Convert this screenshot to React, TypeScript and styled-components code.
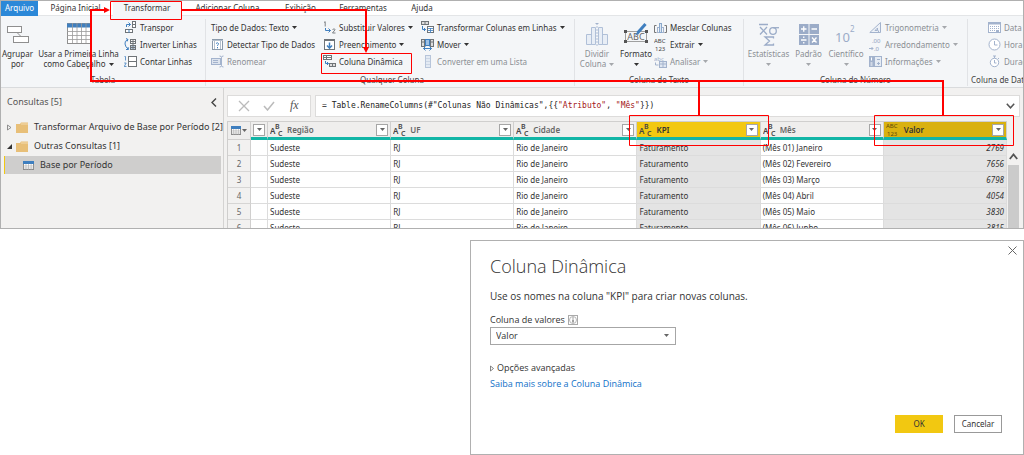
import React from "react";
import styled, { createGlobalStyle, css } from "styled-components";

const Global = createGlobalStyle`
  * { box-sizing: border-box; }
  body { margin: 0; background: #fff; color: #333; font: 8px/10px "Noto Sans", "Open Sans", sans-serif; }
  button, select, input { font: inherit; color: inherit; margin: 0; padding: 0; border: 0; background: none; }
  svg { display: block; flex: none; }
`;

/* ---------- layout ---------- */
const Page = styled.main`
  position: relative;
  display: flex;
  flex-direction: column;
  gap: 11px;
`;
const AppWindow = styled.section`
  border: 1px solid #b0b0b0;
  overflow: hidden;
`;
const Tabs = styled.nav`
  display: flex;
  height: 15px;
  background: #fff;
  border-bottom: 1px solid #e3e5e7;
`;
const Tab = styled.button<{ $w: number; $kind?: "file" | "active" }>`
  flex: none;
  width: ${(p) => p.$w}px;
  height: 15px;
  line-height: 12px;
  padding-bottom: 2px;
  white-space: nowrap;
  ${(p) => p.$kind === "file" && css`background: #2b88d8; color: #fff;`}
  ${(p) => p.$kind === "active" && css`background: #f4f6f8;`}
`;
const Ribbon = styled.div`
  display: flex;
  height: 72px;
  padding-top: 3px;
  background: #f4f6f8;
  border-bottom: 1px solid #d9dbdd;
`;
const Group = styled.section<{ $w?: number; $pad?: number }>`
  ${(p) => (p.$w ? css`flex: none; width: ${p.$w}px; border-right: 1px solid #e1e3e6;` : css`flex: 1; min-width: 0; overflow: hidden;`)}
  padding-left: ${(p) => p.$pad ?? 0}px;
  height: 67px;
  display: flex;
  flex-direction: column;
  justify-content: space-between;
`;
const GroupBody = styled.div`
  display: flex;
`;
const GroupLabel = styled.div<{ $start?: boolean }>`
  text-align: ${(p) => (p.$start ? "left" : "center")};
  line-height: 12px;
  white-space: nowrap;
  color: #444;
`;
const Column = styled.div<{ $w: number }>`
  flex: none;
  width: ${(p) => p.$w}px;
  display: flex;
  flex-direction: column;
`;
const SmallButton = styled.button<{ $off?: boolean }>`
  display: flex;
  align-items: center;
  gap: 3px;
  height: 17px;
  padding: 0 1px;
  white-space: nowrap;
  color: ${(p) => (p.$off ? "#8b8f94" : "#333")};
`;
const BigButton = styled.button<{ $w: number; $off?: boolean }>`
  flex: none;
  width: ${(p) => p.$w}px;
  display: flex;
  flex-direction: column;
  align-items: center;
  white-space: nowrap;
  color: ${(p) => (p.$off ? "#8b8f94" : "#333")};
`;
const BigIcon = styled.span`
  height: 30px;
  display: flex;
  align-items: center;
`;
const Line = styled.span`
  display: flex;
  align-items: center;
  justify-content: center;
  gap: 3px;
  height: 10px;
`;

const Body = styled.div`
  display: flex;
  height: 140px;
  background: #f2f1f0;
`;
const Sidebar = styled.aside`
  flex: none;
  width: 223px;
  padding: 7px 2px 0 3px;
  border-right: 1px solid #d4d3d2;
  font-size: 9px;
`;
const SideHead = styled.header`
  display: flex;
  align-items: center;
  justify-content: space-between;
  height: 14px;
  margin-bottom: 9px;
  padding: 0 4px 0 3px;
  h2 { margin: 0; font-size: 9px; font-weight: 400; color: #555; }
`;
const Tree = styled.ul`
  list-style: none;
  margin: 0;
  padding: 0;
  display: flex;
  flex-direction: column;
  gap: 1px;
`;
const TreeItem = styled.li<{ $selected?: boolean }>`
  display: flex;
  align-items: center;
  height: 18px;
  gap: 4px;
  padding-left: 3px;
  white-space: nowrap;
  span { margin-left: 2px; }
  ${(p) => p.$selected && css`background: #cfcecd; border-left: 1px solid #f2c811; padding-left: 18px;`}
`;
const Workspace = styled.div`
  flex: 1;
  min-width: 0;
  padding: 7px 3px 0;
  display: flex;
  flex-direction: column;
  gap: 4px;
`;
const FormulaBar = styled.div`
  display: flex;
  flex: none;
  gap: 4px;
  height: 22px;
`;
const FormulaTools = styled.div`
  flex: none;
  width: 84px;
  display: flex;
  align-items: center;
  justify-content: space-around;
  padding: 0 3px;
  background: #fff;
  border: 1px solid #dddcdb;
`;
const Formula = styled.div`
  flex: 1;
  min-width: 0;
  display: flex;
  align-items: center;
  justify-content: space-between;
  padding: 0 4px 0 6px;
  background: #fff;
  border: 1px solid #dddcdb;
  code { font: 8px/12px "DejaVu Sans Mono", monospace; color: #222; white-space: pre; }
  em { font-style: normal; color: #a31515; }
`;
const GridArea = styled.div`
  display: flex;
  flex: 1;
  min-height: 0;
  overflow: hidden;
  border-left: 1px solid #cfcecd;
`;
const TableWrap = styled.div`
  flex: 1;
  min-width: 0;
`;
const Table = styled.table`
  width: 100%;
  table-layout: fixed;
  border-collapse: separate;
  border-spacing: 0;
`;
const RowNumberCol = styled.col`
  width: 23px;
`;
const NarrowCol = styled.col`
  width: 17px;
`;
const Head = styled.th<{ $bg?: string; $corner?: boolean }>`
  height: 19px;
  padding: 0 2px;
  text-align: left;
  font-weight: 600;
  color: ${(p) => (p.$bg ? "#333" : "#666")};
  background: ${(p) => p.$bg ?? "#efeeed"};
  border-top: 1px solid #d0cfce;
  border-right: 1px solid #d0cfce;
  border-bottom: ${(p) => (p.$corner ? "1px solid #d0cfce" : "3px solid #12b5a6")};
`;
const HeadRow = styled.div<{ $tight?: boolean }>`
  display: flex;
  align-items: center;
  gap: ${(p) => (p.$tight ? 1 : 4)}px;
  padding-left: ${(p) => (p.$tight ? 1 : 0)}px;
`;
const Filter = styled.button`
  flex: none;
  width: 12px;
  height: 12px;
  margin-left: auto;
  display: flex;
  align-items: center;
  justify-content: center;
  background: #fff;
  border: 1px solid #a6a6a6;
`;
const Cell = styled.td<{ $sel?: boolean; $num?: boolean }>`
  height: 16px;
  padding: 0 2px;
  white-space: nowrap;
  background: ${(p) => (p.$sel ? "#e4e4e4" : "#fff")};
  border-right: 1px solid #dcdcdc;
  border-bottom: 1px solid #dcdcdc;
  ${(p) => p.$num && css`text-align: right; font-style: italic;`}
`;
const RowHead = styled.th`
  height: 16px;
  padding: 0;
  text-align: center;
  font-weight: 400;
  color: #666;
  background: #f2f1f0;
  border-right: 1px solid #d0cfce;
  border-bottom: 1px solid #d6d5d4;
`;
const Scrollbar = styled.div`
  flex: none;
  width: 13px;
  padding: 32px 1px 0;
  display: flex;
  flex-direction: column;
  align-items: center;
  gap: 5px;
`;
const Thumb = styled.div`
  flex: 1;
  align-self: stretch;
  background: #cbcbcb;
`;

/* ---------- dialog ---------- */
const Dialog = styled.section`
  position: relative;
  align-self: flex-end;
  width: 554px;
  max-width: 100%;
  padding: 13px 21px 21px 19px;
  background: #fff;
  border: 1px solid #b0b0b0;
  font-family: "Open Sans", "Noto Sans", sans-serif;
  font-size: 9px;
  display: flex;
  flex-direction: column;
  align-items: flex-start;
  h1 { margin: 0 0 12px; font-size: 18px; line-height: 24px; font-weight: 300; color: #333; }
  p { margin: 0 0 12px; font-size: 10px; line-height: 12px; }
`;
const Close = styled.button`
  position: absolute;
  top: 5px;
  right: 6px;
`;
const FieldLabel = styled.label`
  display: flex;
  align-items: center;
  gap: 3px;
  height: 12px;
  margin-bottom: 1px;
`;
const SelectBox = styled.div`
  position: relative;
  margin-bottom: 17px;
  select {
    appearance: none;
    width: 186px;
    height: 18px;
    padding: 0 5px;
    background: #fff;
    border: 1px solid #a6a6a6;
  }
  svg { position: absolute; right: 7px; top: 7px; }
`;
const Advanced = styled.button`
  display: flex;
  align-items: center;
  gap: 3px;
  height: 12px;
  margin-bottom: 4px;
`;
const Link = styled.a`
  line-height: 12px;
  color: #0f70c8;
  text-decoration: none;
`;
const Actions = styled.footer`
  align-self: flex-end;
  display: flex;
  gap: 11px;
  margin-top: 25px;
  font-family: "Noto Sans", "Open Sans", sans-serif;
  font-size: 8px;
`;
const Action = styled.button<{ $primary?: boolean }>`
  width: 48px;
  height: 18px;
  border: 1px solid ${(p) => (p.$primary ? "#f2c811" : "#999")};
  background: ${(p) => (p.$primary ? "#f2c811" : "#fff")};
`;
const Callouts = styled.svg`
  position: absolute;
  top: 0;
  left: 0;
  pointer-events: none;
`;

/* ---------- icons ---------- */
const G = "#6f7478";
const B = "#3f7fbf";
const P = "#a3b3cd";

const Ico = ({ w = 13, h = 13, children }: { w?: number; h?: number; children: React.ReactNode }) => (
  <svg width={w} height={h} viewBox={`0 0 ${w} ${h}`} fill="none" stroke={G} strokeWidth="1" aria-hidden="true">
    {children}
  </svg>
);
const Caret = ({ color = "#333" }: { color?: string }) => (
  <svg width="5" height="3" viewBox="0 0 5 3" aria-hidden="true"><path d="M0 0h5L2.5 3z" fill={color} /></svg>
);
const TableIcon = ({ w = 11, h = 9 }: { w?: number; h?: number }) => (
  <Ico w={w} h={h}>
    <rect x=".5" y=".5" width={w - 1} height={h - 1} fill="#fff" stroke="#8a8a8a" />
    <path d={`M0 1.5h${w}`} stroke={B} strokeWidth="3" />
    <path d={`M${w * 0.27} 3v${h - 3}M${w * 0.5} 3v${h - 3}M${w * 0.74} 3v${h - 3}M0 ${h * 0.55}h${w}M0 ${h * 0.78}h${w}`} stroke="#a9a9a9" strokeWidth=".6" />
  </Ico>
);

const I = {
  group: (
    <Ico w={22} h={17}>
      <rect x=".5" y=".5" width="14" height="6" fill="#fff" stroke="#8f8f8f" />
      <rect x="6.5" y="10.5" width="15" height="6" fill="#fff" stroke="#8f8f8f" />
      <path d="M10 6.5l4 4" stroke="#8f8f8f" />
    </Ico>
  ),
  header: (
    <Ico w={24} h={22}>
      <rect x=".5" y=".5" width="23" height="20" fill="#fff" stroke="#8f8f8f" />
      <path d="M0 2.5h24" stroke={B} strokeWidth="4" />
      <path d="M5.5 0v20M10 0v20M14.5 0v20M19 0v20M0 8.5h24M0 12.5h24M0 16.5h24" stroke="#9b9b9b" strokeWidth=".8" />
    </Ico>
  ),
  transpose: (
    <Ico>
      <path d="M2.5 6V3.500h4M4.500 1.500l2 2-2 2" stroke={B} />
      <rect x="8.500" y=".5" width="3" height="6" fill="#fff" /><path d="M8 3.500h4" />
      <rect x="1.500" y="8.500" width="7" height="3" fill="#fff" /><path d="M5 8.500v3" stroke={B} />
    </Ico>
  ),
  invert: (
    <Ico>
      <path d="M3.500 1.500Q.5 3 1 6t3 5M2 .5l2 1-1 2M2 11.500l2.500 0-.5-2.500" stroke={B} />
      <rect x="6.500" y="1.500" width="5" height="4" fill="#fff" /><rect x="6.500" y="7.500" width="5" height="4" fill="#b8cbe0" /><path d="M7 3.500h5M7 9.500h5M9 1.500v10" />
    </Ico>
  ),
  count: (
    <Ico>
      <path d="M.5 1.500h1v4M.2 8h2L.2 11.500h2.300" stroke={B} strokeWidth=".8" />
      <rect x="4.500" y="1.500" width="8" height="10" fill="#fff" /><path d="M4 6.500h9" />
    </Ico>
  ),
  detect: (
    <Ico>
      <rect x="1.500" y="1.500" width="10" height="10" fill="#fff" stroke="#8a9aab" /><path d="M1 2.500h11M3.500 3v8M9.500 3v8" stroke="#b4c0cd" />
      <path d="M5 5.500q1.500-1.500 2.500 0c0 1.500-1 1-1 2.500M6.500 9v1.300" stroke={B} />
    </Ico>
  ),
  rename: (
    <Ico>
      <rect x=".5" y="3.500" width="9" height="6" fill="#dde4ee" stroke={P} /><path d="M2 5.500h5M2 7.500h5" stroke={P} />
      <path d="M8.500 1q2 0 2 1.500v8q0 1.500-2 1.500M12.500 1q-2 0-2 1.500M12.500 12q-2 0-2-1.500" stroke={P} />
    </Ico>
  ),
  replace: (
    <Ico>
      <path d="M1 1.500l1.200-.8V5.500M9.500 8.500q2.500-1.500 2.500.3L9.500 12h3" stroke={G} strokeWidth=".9" />
      <path d="M2.500 7v2.500h5M5.500 7.500l2 2-2 2" stroke={B} />
    </Ico>
  ),
  fill: (
    <Ico>
      <rect x="1.500" y="1.500" width="10" height="10" fill="#fff" /><path d="M1 2.500h11" />
      <path d="M6.500 4.500v5M4 7.500l2.500 2.700L9 7.500" stroke={B} strokeWidth="1.500" />
    </Ico>
  ),
  pivot: (
    <Ico>
      <rect x=".5" y=".5" width="8" height="4" fill="#fff" /><path d="M1 2.500h8M3.500 0v4.500" />
      <path d="M2.500 6v2.500h3M4 7l1.500 1.500-1.500 1.500" stroke={B} />
      <rect x="6.500" y="8.500" width="6" height="3" fill="#ddd" /><path d="M9.500 8.500v3" />
    </Ico>
  ),
  unpivot: (
    <Ico>
      <rect x=".5" y=".5" width="7" height="3" fill="#ddd" /><path d="M4 .5v3" />
      <path d="M1.500 5v3.500h3M3 7l1.500 1.500-1.500 1.500" stroke={B} />
      <rect x="6.500" y="5.500" width="6" height="6" fill="#fff" /><path d="M7 7.500h5M7 9.500h5M9.500 7v5" stroke={B} strokeWidth=".8" />
    </Ico>
  ),
  move: (
    <Ico>
      <rect x=".5" y="1.500" width="3" height="7" fill="#ddd" /><rect x="9.500" y="1.500" width="3" height="7" fill="#ddd" /><rect x="4.500" y="1.500" width="4" height="6" fill="#9cc0e4" stroke={B} />
      <path d="M0 4h4M9 4h4" />
      <path d="M2.500 10.500h8M4.500 8.500l-2 2 2 2M8.500 8.500l2 2-2 2" stroke={B} />
    </Ico>
  ),
  list: (
    <Ico>
      <rect x="4.500" y=".5" width="5" height="12" fill="#e3eaf3" stroke="#b7c5da" /><path d="M5 3.500h4M5 6.500h4M5 9.500h4" stroke="#cbd6e5" />
    </Ico>
  ),
  split: (
    <Ico w={22} h={24}>
      <path d="M.5 12.500h5v10h-5zM16.500 12.500h5v10h-5zM5.500 5.500h4v17h-4zM12.500 5.500h4v17h-4z" fill="#e8eef6" stroke="#b0c0d8" />
      <path d="M11 4v20" stroke="#b0c0d8" strokeDasharray="2 1" /><path d="M9 1h4l-2 2z" fill={P} stroke="none" />
    </Ico>
  ),
  format: (
    <Ico w={24} h={24}>
      <rect x="1.500" y="9.500" width="21" height="10" stroke="#8a8a8a" strokeWidth=".8" />
      <path d="M0 8h3v3H0zM21 8h3v3h-3zM0 18h3v3H0zM21 18h3v3h-3z" fill="#555" stroke="none" />
      <text x="12" y="18" fontSize="9" textAnchor="middle" fill="#666" stroke="none">ABC</text>
      <path d="M21.500 2l-8 9" stroke={B} strokeWidth="3" /><path d="M13.500 10l-3 4 4.500-2.500z" fill={B} stroke="none" />
    </Ico>
  ),
  merge: (
    <Ico>
      <path d="M2.500 4.500h-2v7h2M10.500 4.500h2v7h-2" stroke="#777" />
      <rect x="3.500" y="6.500" width="2" height="5" stroke={P} /><rect x="7.500" y="6.500" width="2" height="5" stroke={P} /><rect x="5.500" y="2.500" width="2" height="9" fill="#dce6f2" stroke="#89a8cc" />
    </Ico>
  ),
  extract: (
    <Ico h={15}>
      <g fill="#444" stroke="none" fontSize="6"><text x="0" y="6">ABC</text><text x="1" y="14">123</text></g>
    </Ico>
  ),
  analyze: (
    <Ico>
      <text x="0" y="6" fontSize="6" fill={P} stroke="none">abc</text>
      <rect x="5.500" y="6.500" width="7" height="6" fill="#dfe7f2" stroke={P} /><path d="M6 9h6M9 7v5M1.500 7.500v2.500h3" stroke={P} />
    </Ico>
  ),
  stats: (
    <Ico w={22} h={23}>
      <g stroke="#9bacc8" strokeWidth="1.300">
        <path d="M1 1.500h9M2 4l7 7.500M9 4l-7 7.500" /><circle cx="15" cy="8" r="3.300" /><path d="M15 4.700h6" />
        <path d="M15.500 15.500v-1.500h-8.500l4.500 4-4.500 4h8.500v-1.500" />
      </g>
    </Ico>
  ),
  standard: (
    <Ico w={20} h={21}>
      <path d="M0 0h9.500v10H0zM10.500 0H20v10h-9.500zM0 11h9.500v10H0zM10.500 11H20v10h-9.500z" fill="#9bacc8" stroke="none" />
      <path d="M2 5h5.500M4.750 2.300v5.400M12.500 5h5.500M2 16h5.500M4.750 12.600v1.500M4.750 18v1.500M13 13.500l4.500 5M17.500 13.500l-4.500 5" stroke="#fff" strokeWidth="1.300" />
    </Ico>
  ),
  scientific: (
    <Ico w={22} h={22}>
      <text x="0" y="19" fontSize="13" fill="#9bacc8" stroke="none">10</text><text x="15" y="9" fontSize="8" fill="#9bacc8" stroke="none">2</text>
    </Ico>
  ),
  trig: (
    <Ico>
      <path d="M11.500 1.500v10H.8zM8.500 7v2.500H6z" fill="#edf1f7" stroke={P} /><path d="M9.500 12v-2.500" stroke={P} />
    </Ico>
  ),
  round: (
    <Ico h={15}>
      <g fill="#8fa0bd" stroke="none" fontSize="6"><text x="3" y="6">.00</text><text x="5" y="14">.0</text></g><path d="M0 11.500h4M2.500 10l1.500 1.500L2.500 13" stroke={P} />
    </Ico>
  ),
  info: (
    <Ico>
      <rect x="0" y="1" width="5" height="11" fill={P} stroke="none" /><rect x="5.500" y="1.500" width="7" height="10" fill="#e6ecf4" stroke={P} /><path d="M2.500 2.500v3M1.500 8h2M1.500 10h2" stroke="#fff" /><path d="M8 4.500h3M8 8.500h3M9.500 7v3" stroke={P} />
    </Ico>
  ),
  date: (
    <Ico>
      <rect x=".5" y="1.500" width="12" height="10" fill="#fff" stroke={P} /><path d="M0 2.500h13" stroke={P} strokeWidth="2" /><path d="M2 5.500h9M2 7.500h9M2 9.500h5" stroke={P} strokeDasharray="1 1" /><path d="M8 9h3v2H8z" fill={P} stroke="none" />
    </Ico>
  ),
  time: (
    <Ico><circle cx="6.500" cy="6.500" r="5.500" fill="#fff" stroke={P} /><path d="M6.500 3v4h3" stroke={P} /></Ico>
  ),
  duration: (
    <Ico><circle cx="6.500" cy="7.500" r="4.200" fill="#fff" stroke={P} /><path d="M5 1h3M6.500 1v2M6.500 5v3h2M10 3l1 1" stroke={P} /></Ico>
  ),
  folder: (
    <svg width="12" height="11" viewBox="0 0 12 11" aria-hidden="true"><path d="M0 2h4l1-1.500h7V11H0z" fill="#e8bf78" /><path d="M5 2h7" stroke="#f6e3c0" strokeWidth=".8" /></svg>
  ),
  abc: (
    <svg width="13" height="13" viewBox="0 0 13 13" aria-hidden="true" fill="#444" fontSize="8" fontWeight="600"><text x="0" y="10.500">A</text><text x="5" y="6" fontSize="7">B</text><text x="8" y="12.500" fontSize="7">C</text></svg>
  ),
  abc123: (
    <svg width="14" height="15" viewBox="0 0 14 15" aria-hidden="true" fill="#5b4a0a" fontSize="6" fontWeight="400"><text x="0" y="6">ABC</text><text x="1" y="14">123</text></svg>
  ),
};

/* ---------- data ---------- */
type Item = [icon: React.ReactNode, label: string, caret?: boolean, off?: boolean];
const Items = ({ w, items }: { w: number; items: Item[] }) => (
  <Column $w={w}>
    {items.map(([icon, label, caret, off]) => (
      <SmallButton key={label} $off={off}>
        {icon}
        {label}
        {caret && <Caret color={off ? "#a5a8ac" : "#333"} />}
      </SmallButton>
    ))}
  </Column>
);
const Big = ({ w, icon, lines, caret, off }: { w: number; icon: React.ReactNode; lines: string[]; caret?: boolean; off?: boolean }) => (
  <BigButton $w={w} $off={off}>
    <BigIcon>{icon}</BigIcon>
    {lines.map((t, i) => (
      <Line key={i}>
        {t}
        {caret && i === lines.length - 1 && <Caret color={off ? "#a5a8ac" : "#333"} />}
      </Line>
    ))}
  </BigButton>
);

const columns: { name: string; bg?: string; num?: boolean }[] = [
  { name: "Região" },
  { name: "UF" },
  { name: "Cidade" },
  { name: "KPI", bg: "#f2c811" },
  { name: "Mês" },
  { name: "Valor", bg: "#d9b10f", num: true },
];
const rows = [
  ["Janeiro", "2769"],
  ["Fevereiro", "7656"],
  ["Março", "6798"],
  ["Abril", "4054"],
  ["Maio", "3830"],
  ["Junho", "3815"],
].map(([m, v], i) => ["Sudeste", "RJ", "Rio de Janeiro", "Faturamento", `(Mês 0${i + 1}) ${m}`, v]);

export default function App() {
  return (
    <Page>
      <Global />
      <AppWindow>
        <Tabs>
          <Tab $w={37} $kind="file">Arquivo</Tab>
          <Tab $w={75}>Página Inicial</Tab>
          <Tab $w={68} $kind="active">Transformar</Tab>
          <Tab $w={93}>Adicionar Coluna</Tab>
          <Tab $w={53}>Exibição</Tab>
          <Tab $w={72}>Ferramentas</Tab>
          <Tab $w={46}>Ajuda</Tab>
        </Tabs>
        <Ribbon>
          <Group $w={205}>
            <GroupBody>
              <Big w={33} icon={I.group} lines={["Agrupar", "por"]} />
              <Big w={89} icon={I.header} lines={["Usar a Primeira Linha", "como Cabeçalho"]} caret />
              <Items w={82} items={[[I.transpose, "Transpor"], [I.invert, "Inverter Linhas"], [I.count, "Contar Linhas"]]} />
            </GroupBody>
            <GroupLabel>Tabela</GroupLabel>
          </Group>
          <Group $w={369} $pad={4}>
            <GroupBody>
              <Items w={112} items={[[null, "Tipo de Dados: Texto", true], [I.detect, "Detectar Tipo de Dados"], [I.rename, "Renomear", false, true]]} />
              <Items w={98} items={[[I.replace, "Substituir Valores", true], [I.fill, "Preenchimento", true], [I.pivot, "Coluna Dinâmica"]]} />
              <Items w={150} items={[[I.unpivot, "Transformar Colunas em Linhas", true], [I.move, "Mover", true], [I.list, "Converter em uma Lista", false, true]]} />
            </GroupBody>
            <GroupLabel>Qualquer Coluna</GroupLabel>
          </Group>
          <Group $w={169}>
            <GroupBody>
              <Big w={44} icon={I.split} lines={["Dividir", "Coluna"]} caret off />
              <Big w={34} icon={I.format} lines={["Formato", ""]} caret />
              <Items w={90} items={[[I.merge, "Mesclar Colunas"], [I.extract, "Extrair", true], [I.analyze, "Analisar", true, true]]} />
            </GroupBody>
            <GroupLabel>Coluna de Texto</GroupLabel>
          </Group>
          <Group $w={224}>
            <GroupBody>
              <Big w={49} icon={I.stats} lines={["Estatísticas", ""]} caret off />
              <Big w={31} icon={I.standard} lines={["Padrão", ""]} caret off />
              <Big w={44} icon={I.scientific} lines={["Científico", ""]} caret off />
              <Items w={98} items={[[I.trig, "Trigonometria", true, true], [I.round, "Arredondamento", true, true], [I.info, "Informações", true, true]]} />
            </GroupBody>
            <GroupLabel>Coluna de Número</GroupLabel>
          </Group>
          <Group $pad={3}>
            <GroupBody>
              <Column $w={16} />
              <Items w={90} items={[[I.date, "Data", true, true], [I.time, "Hora", true, true], [I.duration, "Duração", true, true]]} />
            </GroupBody>
            <GroupLabel $start>Coluna de Data e Hora</GroupLabel>
          </Group>
        </Ribbon>
        <Body>
          <Sidebar>
            <SideHead>
              <h2>Consultas [5]</h2>
              <Ico w={6} h={9}><path d="M5 .5l-4 4 4 4" stroke="#444" strokeWidth="1.400" /></Ico>
            </SideHead>
            <Tree>
              <TreeItem>
                <Ico w={5} h={7}><path d="M.5 1v5l3.500-2.500z" stroke="#777" strokeWidth=".8" /></Ico>
                {I.folder}
                <span>Transformar Arquivo de Base por Período [2]</span>
              </TreeItem>
              <TreeItem>
                <Ico w={5} h={7}><path d="M5 1v5H0z" fill="#333" stroke="none" /></Ico>
                {I.folder}
                <span>Outras Consultas [1]</span>
              </TreeItem>
              <TreeItem $selected>
                <TableIcon />
                <span>Base por Período</span>
              </TreeItem>
            </Tree>
          </Sidebar>
          <Workspace>
            <FormulaBar>
              <FormulaTools>
                <Ico w={12} h={12}><path d="M1 1l10 10M11 1L1 11" stroke="#bbb" strokeWidth="1.300" /></Ico>
                <Ico w={12} h={10}><path d="M1 5l3.500 4L11 1" stroke="#bbb" strokeWidth="1.500" /></Ico>
                <svg width="11" height="14" viewBox="0 0 11 14" fill="#555" aria-hidden="true"><text x="1" y="10" fontSize="12" fontStyle="italic" fontFamily="Liberation Serif, serif">fx</text></svg>
              </FormulaTools>
              <Formula>
                <code>= Table.RenameColumns(#"Colunas Não Dinâmicas",{"{{"}<em>"Atributo"</em>, <em>"Mês"</em>{"}})"}</code>
                <Ico w={9} h={6}><path d="M.8.800l3.700 4 3.700-4" stroke="#555" strokeWidth="1.500" /></Ico>
              </Formula>
            </FormulaBar>
            <GridArea>
              <TableWrap>
                <Table>
                  <colgroup>
                    <RowNumberCol />
                    <NarrowCol />
                    {columns.map((c) => <col key={c.name} />)}
                  </colgroup>
                  <thead>
                    <tr>
                      <Head $corner><HeadRow $tight><TableIcon w={10} h={9} /><Caret color="#666" /></HeadRow></Head>
                      <Head><HeadRow><Filter aria-label="Filtrar"><Caret color="#666" /></Filter></HeadRow></Head>
                      {columns.map((c) => (
                        <Head key={c.name} $bg={c.bg}>
                          <HeadRow>
                            {c.num ? I.abc123 : I.abc}
                            {c.name}
                            <Filter aria-label={`Filtrar ${c.name}`}><Caret color="#666" /></Filter>
                          </HeadRow>
                        </Head>
                      ))}
                    </tr>
                  </thead>
                  <tbody>
                    {rows.map((r, i) => (
                      <tr key={i}>
                        <RowHead scope="row">{i + 1}</RowHead>
                        <Cell />
                        {r.map((v, j) => (
                          <Cell key={j} $sel={!!columns[j].bg} $num={columns[j].num}>{v}</Cell>
                        ))}
                      </tr>
                    ))}
                  </tbody>
                </Table>
              </TableWrap>
              <Scrollbar>
                <Ico w={9} h={7}><path d="M.8 6l3.700-4.500L8.200 6" stroke="#555" strokeWidth="1.800" /></Ico>
                <Thumb />
              </Scrollbar>
            </GridArea>
          </Workspace>
        </Body>
      </AppWindow>

      <Dialog role="dialog" aria-labelledby="dlg-title">
        <Close aria-label="Fechar"><Ico w={9} h={9}><path d="M.5.500l8 8M8.500.500l-8 8" stroke="#666" /></Ico></Close>
        <h1 id="dlg-title">Coluna Dinâmica</h1>
        <p>Use os nomes na coluna "KPI" para criar novas colunas.</p>
        <FieldLabel htmlFor="values">
          Coluna de valores
          <Ico w={10} h={10}><rect x=".5" y=".5" width="9" height="9" stroke="#555" strokeDasharray="1 1" /><circle cx="5" cy="5" r="3.500" stroke="#999" strokeWidth=".7" /><path d="M5 2.500v1M5 4.500v3" stroke="#444" /></Ico>
        </FieldLabel>
        <SelectBox>
          <select id="values" defaultValue="Valor"><option>Valor</option></select>
          <Caret color="#666" />
        </SelectBox>
        <Advanced>
          <Ico w={4} h={7}><path d="M.5 1v5l3-2.500z" stroke="#666" strokeWidth=".8" /></Ico>
          Opções avançadas
        </Advanced>
        <Link href="#">Saiba mais sobre a Coluna Dinâmica</Link>
        <Actions>
          <Action $primary>OK</Action>
          <Action>Cancelar</Action>
        </Actions>
      </Dialog>

      <Callouts width="1024" height="150" viewBox="0 0 1024 150" fill="none" stroke="#f00" aria-hidden="true">
        <path d="M110.500 1.500h71v18h-71zM321.500 53.500h90v20h-90zM629.500 115.500h139v30h-139zM874.500 115.500h139v30h-139z" stroke="#f00" />
        <path d="M182 10h184v39M943 115V81H91V10h14M699 81v34" strokeWidth="2" />
        <path d="M363 47h6l-3 6zM104 7v6l6-3z" fill="#f00" stroke="none" />
      </Callouts>
    </Page>
  );
}
